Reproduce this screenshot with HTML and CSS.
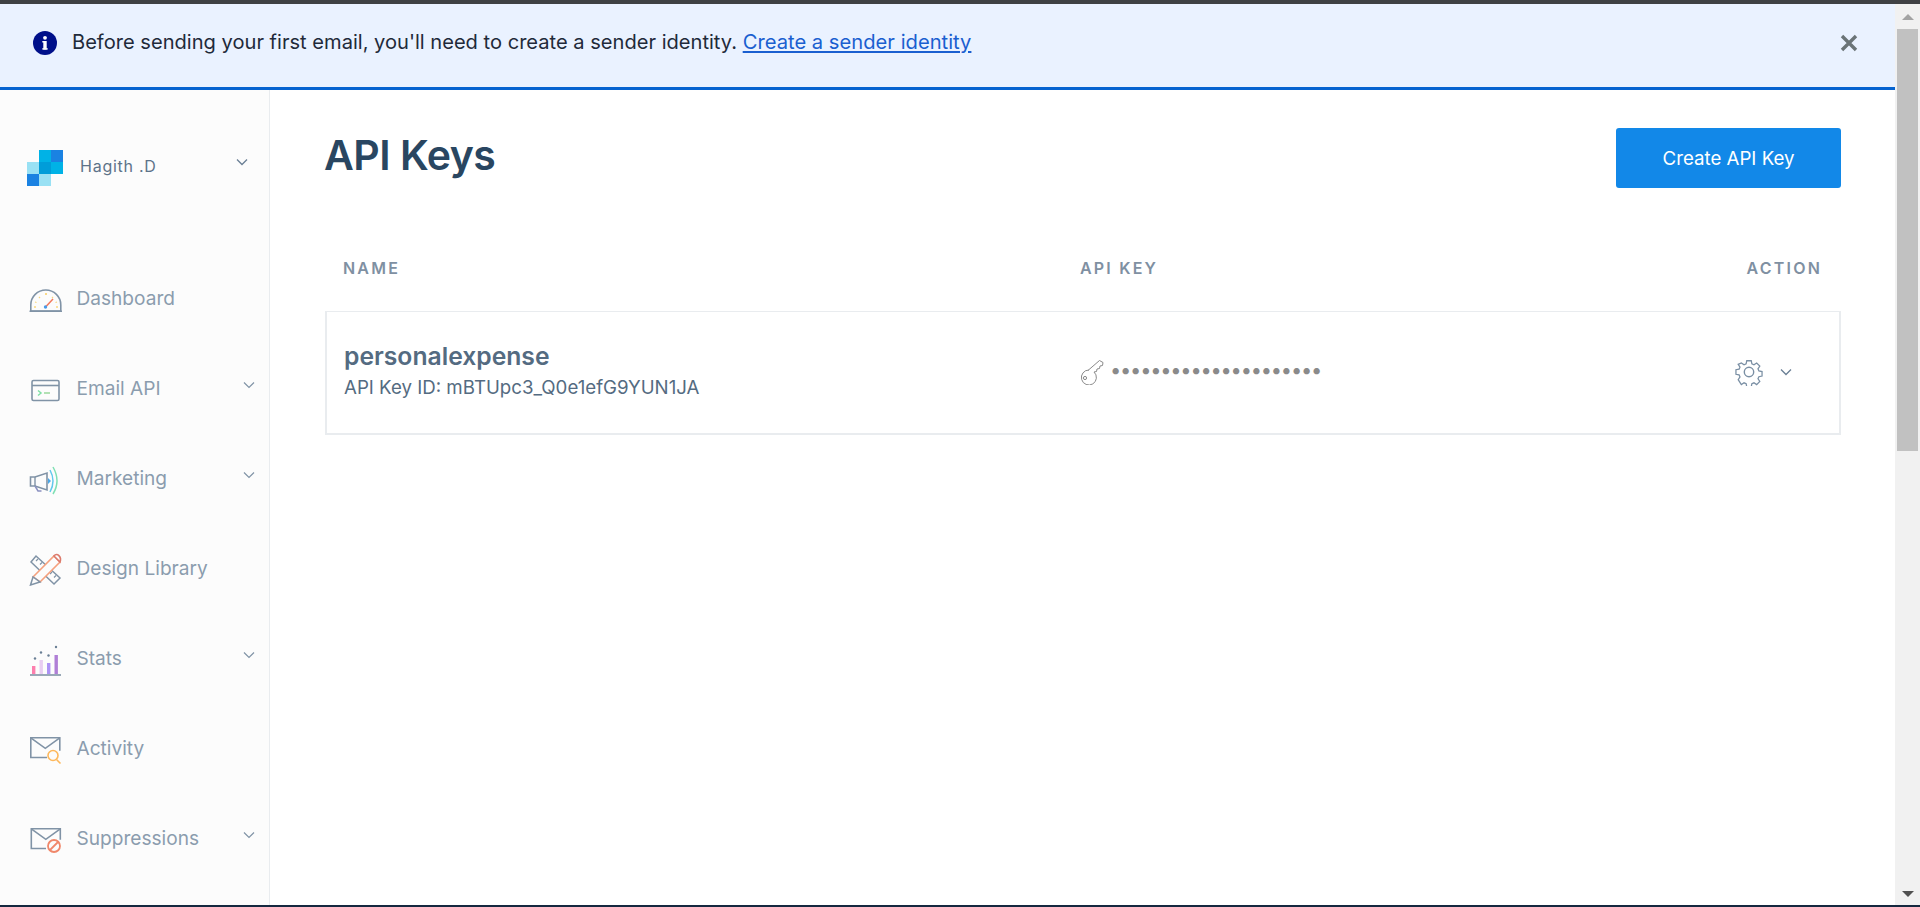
FILE: index.html
```html
<!DOCTYPE html>
<html lang="en">
<head>
<meta charset="utf-8">
<title>API Keys</title>
<link rel="stylesheet" href="styles.css">
</head>
<body>
<div class="topbar"></div>
<div class="window">
  <div class="page">
    <div class="banner">
      <svg class="info" viewBox="0 0 24 24"><circle cx="12" cy="12" r="12" fill="#00108a"/><circle cx="12" cy="6.800" r="1.900" fill="#fff"/><rect x="10.300" y="10" width="3.400" height="8.600" fill="#fff"/><rect x="9.300" y="10" width="3" height="1.500" fill="#fff"/><rect x="9.300" y="17.200" width="5.400" height="1.400" fill="#fff"/></svg>
      <p class="banner-text">Before sending your first email, you'll need to create a sender identity. <a href="#" class="banner-link">Create a sender identity</a></p>
      <svg class="close" viewBox="0 0 18 18"><path d="M2 2l14 14M16 2L2 16" stroke="#6b7477" stroke-width="3.400" fill="none"/></svg>
    </div>
    <div class="body">
      <aside class="sidebar">
        <div class="account">
          <svg class="logo" viewBox="0 0 36 36">
            <rect x="12" y="0" width="12" height="12" fill="#00b2e6"/><rect x="24" y="0" width="12" height="12" fill="#1a82e2"/>
            <rect x="0" y="12" width="12" height="12" fill="#99e1f4"/><rect x="12" y="12" width="12" height="12" fill="#009dd9"/><rect x="24" y="12" width="12" height="12" fill="#00b2e6"/>
            <rect x="0" y="24" width="12" height="12" fill="#1a82e2"/><rect x="12" y="24" width="12" height="12" fill="#99e1f4"/>
          </svg>
          <span class="account-name">Hagith .D</span>
          <svg class="chev chev-account" viewBox="0 0 12 8"><path d="M1 1.500l5 5 5-5" fill="none" stroke="#6a7f95" stroke-width="1.300"/></svg>
        </div>
        <nav class="nav">
          <a class="nav-item" href="#">
            <svg class="nav-icon" viewBox="0 0 36 36"><path d="M2.800 31v-6a15 15 0 0 1 30 0v6z" fill="none" stroke="#8093a6" stroke-width="1.600"/><path d="M1.500 31.300h32.500" stroke="#8093a6" stroke-width="1.600"/><path d="M17 14h2M18 13v2M11 17l1 1M25 17l-1 1M7 22l1.500.5M29 22l-1.500.5M6 27h2M28 27h2" stroke="#f9d77e" stroke-width="1.300"/><path d="M18 26.500l7-7.500" stroke="#f2785c" stroke-width="1.500"/><circle cx="17.500" cy="27" r="1.700" fill="#4a9be8"/></svg>
            <span class="nav-label">Dashboard</span>
          </a>
          <a class="nav-item" href="#">
            <svg class="nav-icon" viewBox="0 0 36 36"><rect x="4" y="10.500" width="27" height="20" rx="1.500" fill="none" stroke="#8093a6" stroke-width="1.600"/><path d="M4 15.500h27" stroke="#8093a6" stroke-width="1.600"/><path d="M10 20.500l3 2.500-3 2.500" fill="none" stroke="#7fe0a4" stroke-width="1.500"/><path d="M16 23h6" stroke="#9ad99c" stroke-width="1.500"/></svg>
            <span class="nav-label">Email API</span>
            <svg class="chev" viewBox="0 0 12 8"><path d="M1 1.500l5 5 5-5" fill="none" stroke="#8093a6" stroke-width="1.200"/></svg>
          </a>
          <a class="nav-item" href="#">
            <svg class="nav-icon" viewBox="0 0 36 36"><path d="M2.500 17h4.500l12-4v17l-12-4H2.500z" fill="none" stroke="#8093a6" stroke-width="1.600"/><path d="M7 26l3 5h3.500" fill="none" stroke="#8a90c0" stroke-width="1.500"/><path d="M7 17v9" stroke="#8093a6" stroke-width="1.400"/><path d="M20 18l3 3-3 3z" fill="#4aa8e8"/><path d="M22 10q6 11 0 22" fill="none" stroke="#62c8ec" stroke-width="1.500"/><path d="M25 7q8 14 0 27" fill="none" stroke="#7fe0b4" stroke-width="1.500"/></svg>
            <span class="nav-label">Marketing</span>
            <svg class="chev" viewBox="0 0 12 8"><path d="M1 1.500l5 5 5-5" fill="none" stroke="#8093a6" stroke-width="1.200"/></svg>
          </a>
          <a class="nav-item" href="#">
            <svg class="nav-icon" viewBox="0 0 36 36"><path d="M3 12l5-6 24 22-6 6z" fill="#fcfcfc" stroke="#8093a6" stroke-width="1.500"/><path d="M10 9l-2 2M14 12.500l-2 2M24 22l-2 2M28 25.500l-2 2" stroke="#8093a6" stroke-width="1.200"/><path d="M5 27L26 6l6 6-20 20z" fill="#fcfcfc" stroke="#f5a17e" stroke-width="1.600"/><path d="M26 6c3-4 8 1 6 6z" fill="#fcfcfc" stroke="#dc7a6c" stroke-width="1.600"/><path d="M5 27l-2.500 8 9.500-3z" fill="#fcfcfc" stroke="#8093a6" stroke-width="1.500"/></svg>
            <span class="nav-label">Design Library</span>
          </a>
          <a class="nav-item" href="#">
            <svg class="nav-icon" viewBox="0 0 36 36"><rect x="4" y="26" width="3.400" height="8" fill="#fd7fae"/><rect x="11.500" y="20" width="3.400" height="14" fill="#e8cdf2"/><rect x="19" y="23" width="3.400" height="11" fill="#ac92f5"/><rect x="26.500" y="15" width="3.400" height="19" fill="#b07fd6"/><path d="M2 35h31" stroke="#8093a6" stroke-width="1.600"/><circle cx="7" cy="18.500" r="1.200" fill="#6a7f95"/><circle cx="13" cy="12.500" r="1.200" fill="#6a7f95"/><circle cx="20.500" cy="15.500" r="1.200" fill="#6a7f95"/><circle cx="28" cy="7" r="1.200" fill="#6a7f95"/></svg>
            <span class="nav-label">Stats</span>
            <svg class="chev" viewBox="0 0 12 8"><path d="M1 1.500l5 5 5-5" fill="none" stroke="#8093a6" stroke-width="1.200"/></svg>
          </a>
          <a class="nav-item" href="#">
            <svg class="nav-icon" viewBox="0 0 36 36"><path d="M19 27.500H2.800V7.800h29v13" fill="none" stroke="#8093a6" stroke-width="1.600"/><path d="M2.800 7.800l14.500 10.500L31.800 7.800" fill="none" stroke="#8093a6" stroke-width="1.600"/><circle cx="25" cy="25.500" r="5" fill="#fcfcfc" stroke="#fdb85c" stroke-width="1.600"/><path d="M28.500 29.500l4 4" stroke="#fdb85c" stroke-width="1.600"/></svg>
            <span class="nav-label">Activity</span>
          </a>
          <a class="nav-item" href="#">
            <svg class="nav-icon" viewBox="0 0 36 36"><path d="M18 28.500H3.300V8.800h29v11" fill="none" stroke="#8093a6" stroke-width="1.600"/><path d="M3.300 8.800l14.500 10.500L32.300 8.800" fill="none" stroke="#8093a6" stroke-width="1.600"/><circle cx="26" cy="26" r="6" fill="#fcfcfc" stroke="#f0876a" stroke-width="1.800"/><path d="M22 30l8-8" stroke="#f0876a" stroke-width="1.800"/></svg>
            <span class="nav-label">Suppressions</span>
            <svg class="chev" viewBox="0 0 12 8"><path d="M1 1.500l5 5 5-5" fill="none" stroke="#8093a6" stroke-width="1.200"/></svg>
          </a>
        </nav>
      </aside>
      <main class="main">
        <header class="main-head">
          <h1 class="title">API Keys</h1>
          <button class="primary">Create API Key</button>
        </header>
        <div class="cols">
          <span class="col col-name">NAME</span>
          <span class="col col-key">API KEY</span>
          <span class="col col-action">ACTION</span>
        </div>
        <div class="card">
          <div class="cell-name">
            <div class="key-name">personalexpense</div>
            <div class="key-id">API Key ID: mBTUpc3_Q0e1efG9YUN1JA</div>
          </div>
          <div class="cell-key">
            <svg class="key-icon" viewBox="0 0 26 26"><path d="M9.500 11L20.500 1.500l3.500 2-.5 3-2.500.5-.5 2.500-2.500.5-.5 2.500-2.500.5a7.500 7.500 0 1 1-5-2z" fill="none" stroke="#8a8a8a" stroke-width="1"/><circle cx="6" cy="19" r="1.600" fill="none" stroke="#8a8a8a" stroke-width="1"/></svg>
            <span class="dots">•••••••••••••••••••••</span>
          </div>
          <div class="cell-action">
            <svg class="gear" viewBox="0 0 28 28"><path d="M11.500 1.500h5l.7 3.500 2.300 1 3-2 3.500 3.500-2 3 1 2.300 3.500.7v5l-3.500.7-1 2.300 2 3-3.500 3.500-3-2-2.300 1-.7 3.500h-5l-.7-3.500-2.300-1-3 2L2 22.500l2-3-1-2.300-3.500-.7v-5l3.500-.7 1-2.300-2-3L5.500 4l3 2 2.300-1z" transform="translate(1.400 1.400) scale(.9)" fill="none" stroke="#7a8fa4" stroke-width="1.400"/><circle cx="14" cy="14" r="4.700" fill="none" stroke="#7a8fa4" stroke-width="1.400"/></svg>
            <svg class="chev chev-row" viewBox="0 0 12 8"><path d="M1 1.500l5 5 5-5" fill="none" stroke="#6a7f95" stroke-width="1.300"/></svg>
          </div>
        </div>
      </main>
    </div>
  </div>
  <div class="scrollbar">
    <span class="arrow arrow-up"></span>
    <div class="thumb"></div>
    <span class="arrow arrow-down"></span>
  </div>
</div>
<div class="bottombar"></div>
</body>
</html>
```
FILE: styles.css
```css
* { box-sizing: border-box; }
html, body { margin: 0; height: 100%; overflow: hidden; }
body {
  display: flex;
  flex-direction: column;
  font-family: Inter, "Liberation Sans", sans-serif;
  background: #fff;
  color: #294661;
}
.topbar { height: 4px; background: #3f4144; flex: none; }
.bottombar { height: 2px; background: #15283f; flex: none; }
.window { flex: 1; display: flex; min-height: 0; }
.page { flex: 1; display: flex; flex-direction: column; min-width: 0; }

.banner {
  height: 86px;
  flex: none;
  display: flex;
  align-items: center;
  background: #eaf2ff;
  border-bottom: 3px solid #0563d0;
  padding: 0 37px 6px 33px;
}
.info { width: 24px; height: 24px; flex: none; }
.banner-text { margin: -2px 0 0 15px; font-size: 20.1px; color: #1f2a3a; flex: 1; white-space: nowrap; }
.banner-link { color: #1a5fd0; font-size: 20.2px; }
.close { width: 18px; height: 18px; flex: none; }

.body { flex: 1; display: flex; min-height: 0; }
.sidebar {
  width: 270px;
  flex: none;
  background: #fcfcfc;
  border-right: 1px solid #e9ecef;
}
.account {
  height: 163px;
  display: flex;
  align-items: flex-start;
  padding: 60px 21px 0 27px;
}
.logo { width: 36px; height: 36px; flex: none; }
.account-name { margin: 6px 0 0 17px; font-size: 16px; letter-spacing: .75px; color: #5d7389; flex: 1; }
.chev { width: 12px; height: 8px; flex: none; margin-bottom: 6px; }
.chev-account { margin: 8px 0 0; }

.nav-item {
  height: 90px;
  display: flex;
  align-items: center;
  padding: 0 14px 0 28px;
  text-decoration: none;
}
.nav-icon { width: 36px; height: 36px; flex: none; }
.nav-label { margin-left: 12.500px; font-size: 19.100px; color: #8b9cae; flex: 1; }

.main { flex: 1; padding: 38px 54px 0 55px; min-width: 0; }
.main-head { display: flex; justify-content: space-between; align-items: flex-start; }
.title { margin: -3px 0 0 -1px; font-size: 41px; font-weight: 600; line-height: 60px; letter-spacing: -.5px; color: #294661; }
.primary {
  width: 225px;
  height: 60px;
  border: 0;
  border-radius: 3px;
  background: #1288e8;
  color: #fff;
  font: 400 18.700px Inter, "Liberation Sans", sans-serif;
}
.cols {
  display: flex;
  align-items: center;
  height: 60px;
  margin-top: 50px;
  padding: 0 19px 0 18px;
  margin-bottom: 13px;
  font-size: 16px;
  font-weight: 600;
  letter-spacing: 2.200px;
  color: #7f90a2;
}
.col-name { width: 737px; }
.col-key { flex: 1; }
.card {
  height: 124px;
  display: flex;
  align-items: center;
  border: 2px solid #e9ecef;
  border-top-width: 1px;
  padding: 0 47px 0 17px;
}
.cell-name { width: 737px; margin-top: -6px; }
.key-name { font-size: 24.700px; font-weight: 600; color: #546b81; line-height: 34px; }
.key-id { font-size: 18.700px; color: #546b81; line-height: 26px; margin-top: 2px; }
.cell-key { flex: 1; display: flex; align-items: center; gap: 5px; margin: -2px 0 0 -2px; }
.key-icon { width: 26px; height: 26px; flex: none; }
.dots { font-size: 20px; letter-spacing: -1.200px; color: #8a8a8a; margin-top: -4px; }
.cell-action { display: flex; align-items: center; gap: 17px; margin-top: -2px; }
.gear { width: 28px; height: 28px; flex: none; }
.chev-row { margin: 0; }

.scrollbar {
  width: 25px;
  flex: none;
  display: flex;
  flex-direction: column;
  align-items: center;
  background: #f1f1f1;
}
.arrow { width: 0; height: 0; border-left: 6px solid transparent; border-right: 6px solid transparent; flex: none; }
.arrow-up { border-bottom: 6px solid #a3a3a3; margin: 10px 0 9px; }
.arrow-down { border-top: 6px solid #505050; margin: auto 0 8px; }
.thumb { width: 21px; height: 422px; background: #c1c1c1; flex: none; }
```
